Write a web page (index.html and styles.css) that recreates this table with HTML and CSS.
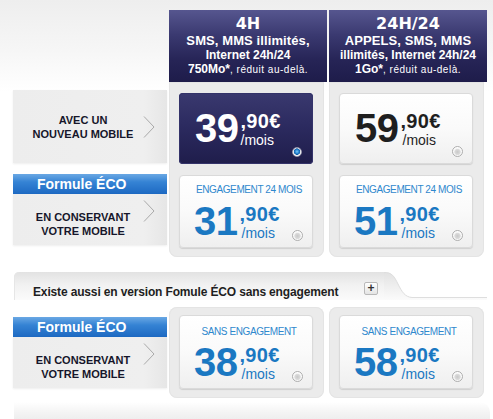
FILE: index.html
```html
<!DOCTYPE html>
<html lang="fr">
<head>
<meta charset="utf-8">
<title>Forfaits</title>
<link rel="stylesheet" href="styles.css">
</head>
<body>
<div class="page">
  <section class="top">
    <div class="labels">
      <div class="label-box first">
        <span class="label-text">AVEC UN<br>NOUVEAU MOBILE</span>
        <svg class="chev" viewBox="0 0 12 22" width="12" height="22"><polyline points="1,0.5 11,11 1,21.5" fill="none" stroke="#a9a9a9" stroke-width="1"/></svg>
      </div>
      <div class="eco">
        <div class="eco-bar">Formule ÉCO</div>
        <div class="label-box second">
          <span class="label-text">EN CONSERVANT<br>VOTRE MOBILE</span>
          <svg class="chev" viewBox="0 0 12 22" width="12" height="22"><polyline points="1,0.5 11,11 1,21.5" fill="none" stroke="#a9a9a9" stroke-width="1"/></svg>
        </div>
      </div>
    </div>

    <div class="plan">
      <div class="plan-head">
        <div class="plan-name">4H</div>
        <div class="plan-desc">
          <div class="d1">SMS, MMS illimités,</div>
          <div class="d2">Internet 24h/24</div>
          <div class="d2">750Mo*<span class="small">, réduit au-delà.</span></div>
        </div>
      </div>
      <div class="plan-body">
        <div class="pbox dark">
          <div class="price">
            <span class="big">39</span>
            <span class="cents"><span class="dec">,90€</span><span class="per">/mois</span></span>
          </div>
          <span class="radio on"></span>
        </div>
        <div class="pbox light eng">
          <div class="tag">ENGAGEMENT 24 MOIS</div>
          <div class="price">
            <span class="big">31</span>
            <span class="cents"><span class="dec">,90€</span><span class="per">/mois</span></span>
          </div>
          <span class="radio"></span>
        </div>
      </div>
    </div>

    <div class="plan">
      <div class="plan-head">
        <div class="plan-name">24H/24</div>
        <div class="plan-desc">
          <div class="d1">APPELS, SMS, MMS</div>
          <div class="d2">illimités, Internet 24h/24</div>
          <div class="d2">1Go*<span class="small">, réduit au-delà.</span></div>
        </div>
      </div>
      <div class="plan-body">
        <div class="pbox light dark-text">
          <div class="price">
            <span class="big">59</span>
            <span class="cents"><span class="dec">,90€</span><span class="per">/mois</span></span>
          </div>
          <span class="radio"></span>
        </div>
        <div class="pbox light eng">
          <div class="tag">ENGAGEMENT 24 MOIS</div>
          <div class="price">
            <span class="big">51</span>
            <span class="cents"><span class="dec">,90€</span><span class="per">/mois</span></span>
          </div>
          <span class="radio"></span>
        </div>
      </div>
    </div>
  </section>

  <div class="band">
    <div class="tab">
      <span class="tab-text">Existe aussi en version Fomule ÉCO sans engagement</span>
      <span class="plus">+</span>
    </div>
    <svg class="tab-end" width="103" height="28" viewBox="0 0 103 28">
      <defs>
        <linearGradient id="tg" x1="0" y1="0" x2="0" y2="1">
          <stop offset="0" stop-color="#e2e2e2"/>
          <stop offset="1" stop-color="#fbfbfb"/>
        </linearGradient>
      </defs>
      <path d="M0 0 C8 0 10 4 14 12 C18 20 21 25 28 25.5 L103 25.5 L103 28 L0 28 Z" fill="url(#tg)"/>
      <path d="M0 0.5 C8 0.5 10 4 14 12 C18 20 21 25 28 25.5 L103 25.5" fill="none" stroke="#dedede"/>
    </svg>
  </div>

  <section class="bottom">
    <div class="labels low">
      <div class="eco">
        <div class="eco-bar">Formule ÉCO</div>
        <div class="label-box second">
          <span class="label-text">EN CONSERVANT<br>VOTRE MOBILE</span>
          <svg class="chev" viewBox="0 0 12 22" width="12" height="22"><polyline points="1,0.5 11,11 1,21.5" fill="none" stroke="#a9a9a9" stroke-width="1"/></svg>
        </div>
      </div>
    </div>
    <div class="plan">
      <div class="plan-body round">
        <div class="pbox light eng tall">
          <div class="tag">SANS ENGAGEMENT</div>
          <div class="price">
            <span class="big">38</span>
            <span class="cents"><span class="dec">,90€</span><span class="per">/mois</span></span>
          </div>
          <span class="radio"></span>
        </div>
      </div>
    </div>
    <div class="plan">
      <div class="plan-body round">
        <div class="pbox light eng tall">
          <div class="tag">SANS ENGAGEMENT</div>
          <div class="price">
            <span class="big">58</span>
            <span class="cents"><span class="dec">,90€</span><span class="per">/mois</span></span>
          </div>
          <span class="radio"></span>
        </div>
      </div>
    </div>
  </section>
  <div class="foot"></div>
</div>
</body>
</html>
```

FILE: styles.css
```css
* {
  box-sizing: border-box;
  margin: 0;
  padding: 0;
}

html, body {
  width: 493px;
  height: 419px;
  overflow: hidden;
}

body {
  background: #fff linear-gradient(#eeeeee 0, #f6f6f6 50px, #ffffff 92px) no-repeat;
  font-family: "Liberation Sans", Arial, sans-serif;
  color: #1c1c1c;
}

.page {
  padding: 10px 6px 0 13px;
}

/* ---------- sections ---------- */
.top,
.bottom {
  display: flex;
  align-items: flex-start;
}

.bottom {
  margin-top: 7px;
}

.labels {
  width: 154px;
  margin-right: 2px;
  padding-top: 80px;
  display: flex;
  flex-direction: column;
}

.labels.low {
  padding-top: 10px;
}

.label-box {
  display: flex;
  align-items: center;
  background: linear-gradient(to right, #ededed 0, #efefef 85%, #e6e6e6 100%);
  box-shadow: 0 1px 2px rgba(0, 0, 0, 0.07);
}

.label-box.first {
  height: 73px;
}

.label-box.second {
  height: 51px;
  align-items: flex-start;
}

.label-text {
  width: 120px;
  margin-left: 10px;
  text-align: center;
  font-weight: bold;
  font-size: 11px;
  line-height: 14px;
  color: #16162a;
}

.label-box.second .label-text {
  margin-top: 16px;
}

.chev {
  display: block;
  flex: none;
}

.label-box.second .chev {
  margin-top: 6px;
}

.eco {
  margin-top: 11px;
}

.labels.low .eco {
  margin-top: 0;
}

.eco-bar {
  height: 20px;
  padding-left: 24px;
  background: linear-gradient(#6aa8e4 0, #3583d4 40%, #1d69c2 100%);
  color: #fff;
  font-weight: bold;
  font-size: 14px;
  line-height: 20px;
}

/* ---------- plans ---------- */
.plan {
  width: 158px;
}

.plan + .plan {
  margin-left: 2px;
}

.plan-head {
  height: 72px;
  padding-top: 5px;
  background: linear-gradient(#56568f 0, #3a3970 35%, #262456 70%, #1e1c4a 100%);
  color: #fff;
  text-align: center;
}

.plan-name {
  font-family: "DejaVu Sans", "Liberation Sans", sans-serif;
  font-weight: bold;
  font-size: 16px;
  line-height: 18px;
}

.plan-desc {
  margin-top: 1px;
  font-weight: bold;
}

.d1 {
  font-size: 13px;
  line-height: 14px;
  letter-spacing: 0.1px;
}

.d2 {
  font-size: 12px;
  line-height: 14px;
}

.small {
  font-weight: normal;
  font-size: 10px;
  letter-spacing: 0.5px;
}

.plan-body {
  width: 155px;
  padding: 11px 11px 9px 10px;
  background: #ebebeb;
  border-radius: 0 0 8px 8px;
  box-shadow: inset 0 0 0 1px #e4e4e4;
  display: flex;
  flex-direction: column;
  gap: 11px;
}

.plan-body.round {
  border-radius: 8px;
  padding: 8px 11px 9px 10px;
}

/* ---------- price boxes ---------- */
.pbox {
  width: 134px;
  height: 71px;
  border-radius: 4px;
  display: grid;
  grid-template-columns: 1fr auto;
  grid-template-rows: 1fr;
}

.pbox.eng {
  height: 73px;
  grid-template-rows: auto 1fr;
}

.pbox.tall {
  height: 74px;
}

.pbox.dark {
  background: linear-gradient(#3a396f 0, #2c2b60 45%, #1f1d4b 100%);
  box-shadow: inset 0 0 0 1px #34336a;
  color: #fff;
}

.pbox.light {
  background: linear-gradient(#ffffff 0, #fafafa 50%, #efefef 100%);
  border: 1px solid #dadada;
  box-shadow: 0 1px 1px rgba(0, 0, 0, 0.12);
}

.dark-text {
  color: #1f1f1f;
}

.eng {
  color: #1a78c2;
}

.tag {
  grid-column: 1 / 3;
  padding-top: 8px;
  padding-left: 6px;
  text-align: center;
  font-size: 10px;
  line-height: 12px;
  letter-spacing: -0.4px;
  color: #2f88cd;
}

.pbox.tall .tag {
  padding-top: 10px;
}

.price {
  display: flex;
  align-items: flex-start;
  align-self: center;
  padding-left: 16px;
  margin-top: -2px;
}

.pbox.light .price {
  padding-left: 15px;
}

.pbox.eng .price {
  align-self: start;
  margin-top: 5px;
  padding-left: 14px;
}

.pbox.tall .price {
  margin-top: 4px;
}

.big {
  font-weight: bold;
  font-size: 40px;
  line-height: 40px;
  letter-spacing: -0.5px;
}

.cents {
  display: flex;
  flex-direction: column;
  margin-left: 2px;
}

.dec {
  font-weight: bold;
  font-size: 20px;
  line-height: 17px;
  margin-top: 5px;
  letter-spacing: 0.3px;
}

.per {
  font-size: 14px;
  line-height: 12px;
  margin-top: 4px;
  padding-left: 2px;
}

.pbox.dark .per {
  padding-left: 0;
}

/* ---------- radio ---------- */
.radio {
  align-self: end;
  width: 11px;
  height: 11px;
  border-radius: 50%;
  margin: 0 9px 6px 0;
  border: 1px solid #adadad;
  background: radial-gradient(circle at 50% 55%, #c8c8c8 0, #dcdcdc 2.8px, #f4f4f4 3.4px, #ffffff 4.5px);
}

.radio.on {
  width: 10px;
  height: 10px;
  margin: 0 11px 7px 0;
  border: 1px solid #9a9aae;
  background: radial-gradient(circle at 50% 45%, #7fcaf7 0, #2a8ad6 1.8px, #135fa8 3px, #e8e8ee 3.4px, #ffffff 4px);
}

/* ---------- band ---------- */
.band {
  display: flex;
  margin-top: 15px;
  margin-left: 1px;
  height: 28px;
}

.tab {
  width: 370px;
  height: 28px;
  display: flex;
  align-items: flex-start;
  padding: 13px 6px 0 19px;
  background: linear-gradient(#e2e2e2 0, #f1f1f1 45%, #fbfbfb 100%);
  border-radius: 5px 0 0 0;
  box-shadow: inset 1px 0 0 #e6e6e6;
}

.tab-text {
  font-weight: bold;
  font-size: 12px;
  line-height: 14px;
  letter-spacing: -0.15px;
  color: #1e1e22;
}

.plus {
  margin-left: auto;
  margin-top: -3px;
  width: 14px;
  height: 13px;
  border: 1px solid #b9b9b9;
  border-radius: 2px;
  background: linear-gradient(#ffffff, #e4e4e4);
  text-align: center;
  font-weight: bold;
  font-size: 12px;
  line-height: 10px;
  color: #333;
}

.tab-end {
  display: block;
  flex: none;
}

/* ---------- foot ---------- */
.foot {
  margin-top: 4px;
  margin-left: 1px;
  width: 476px;
  height: 17px;
  border-radius: 0 10px 0 0;
  background: linear-gradient(#ffffff 0, #f4f4f4 60%, #eeeeee 100%);
}
```
